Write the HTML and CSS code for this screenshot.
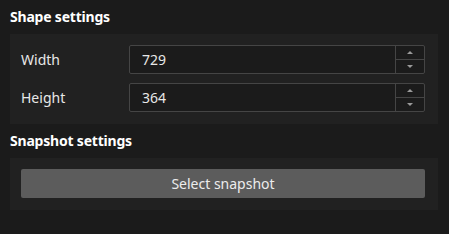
FILE: index.html
```html
<!DOCTYPE html>
<html lang="en">
<head>
    <meta charset="UTF-8">
    <title>Settings</title>
    <link rel="stylesheet" href="styles.css">
</head>
<body>
    <div class="settings">
        <h2 class="title">Shape settings</h2>
        <div class="panel">
            <div class="row">
                <label class="label">Width</label>
                <div class="spin">
                    <input class="spin-value" type="text" value="729">
                    <div class="spin-btns">
                        <span class="up"></span>
                        <span class="down"></span>
                    </div>
                </div>
            </div>
            <div class="row">
                <label class="label">Height</label>
                <div class="spin">
                    <input class="spin-value" type="text" value="364">
                    <div class="spin-btns">
                        <span class="up"></span>
                        <span class="down"></span>
                    </div>
                </div>
            </div>
        </div>

        <h2 class="title">Snapshot settings</h2>
        <div class="panel">
            <button class="btn">Select snapshot</button>
        </div>
    </div>
</body>
</html>
```

FILE: styles.css
```css
* {
    margin: 0;
    padding: 0;
    box-sizing: border-box;
}
body {
    background: #1b1b1b;
    font-family: "Noto Sans", "Open Sans", sans-serif;
    font-size: 14px;
    color: #e8e8e8;
}
.settings {
    padding: 0 11px 0 10px;
}
.title {
    font-size: 14px;
    font-weight: bold;
    color: #fff;
    height: 34px;
    padding-top: 7px;
    line-height: 20px;
    letter-spacing: -0.2px;
}
.panel {
    background: #212121;
    padding: 11px 13px 12px 11px;
}
.row {
    display: flex;
    align-items: center;
}
.row + .row {
    margin-top: 9px;
}
.label {
    width: 108px;
    line-height: 29px;
}
.spin {
    flex: 1;
    display: flex;
    height: 29px;
    border: 1px solid #454545;
    border-radius: 2px;
    background: #1b1b1b;
}
.spin-value {
    flex: 1;
    min-width: 0;
    background: transparent;
    border: none;
    outline: none;
    color: #e8e8e8;
    font: inherit;
    padding-left: 12px;
}
.spin-btns {
    width: 29px;
    display: flex;
    flex-direction: column;
    border-left: 1px solid #454545;
}
.spin-btns span {
    flex: 1;
    display: flex;
    align-items: center;
    justify-content: center;
}
.spin-btns span + span {
    border-top: 1px solid #454545;
}
.spin-btns .up::after {
    content: "";
    border: 3.5px solid transparent;
    border-top: none;
    border-bottom: 3px solid #9a9a9a;
}
.spin-btns .down::after {
    content: "";
    border: 3.5px solid transparent;
    border-bottom: none;
    border-top: 3px solid #9a9a9a;
}
.btn {
    display: block;
    width: 100%;
    height: 29px;
    border: none;
    border-radius: 2px;
    background: #5c5c5c;
    color: #ececec;
    font: inherit;
}
```
